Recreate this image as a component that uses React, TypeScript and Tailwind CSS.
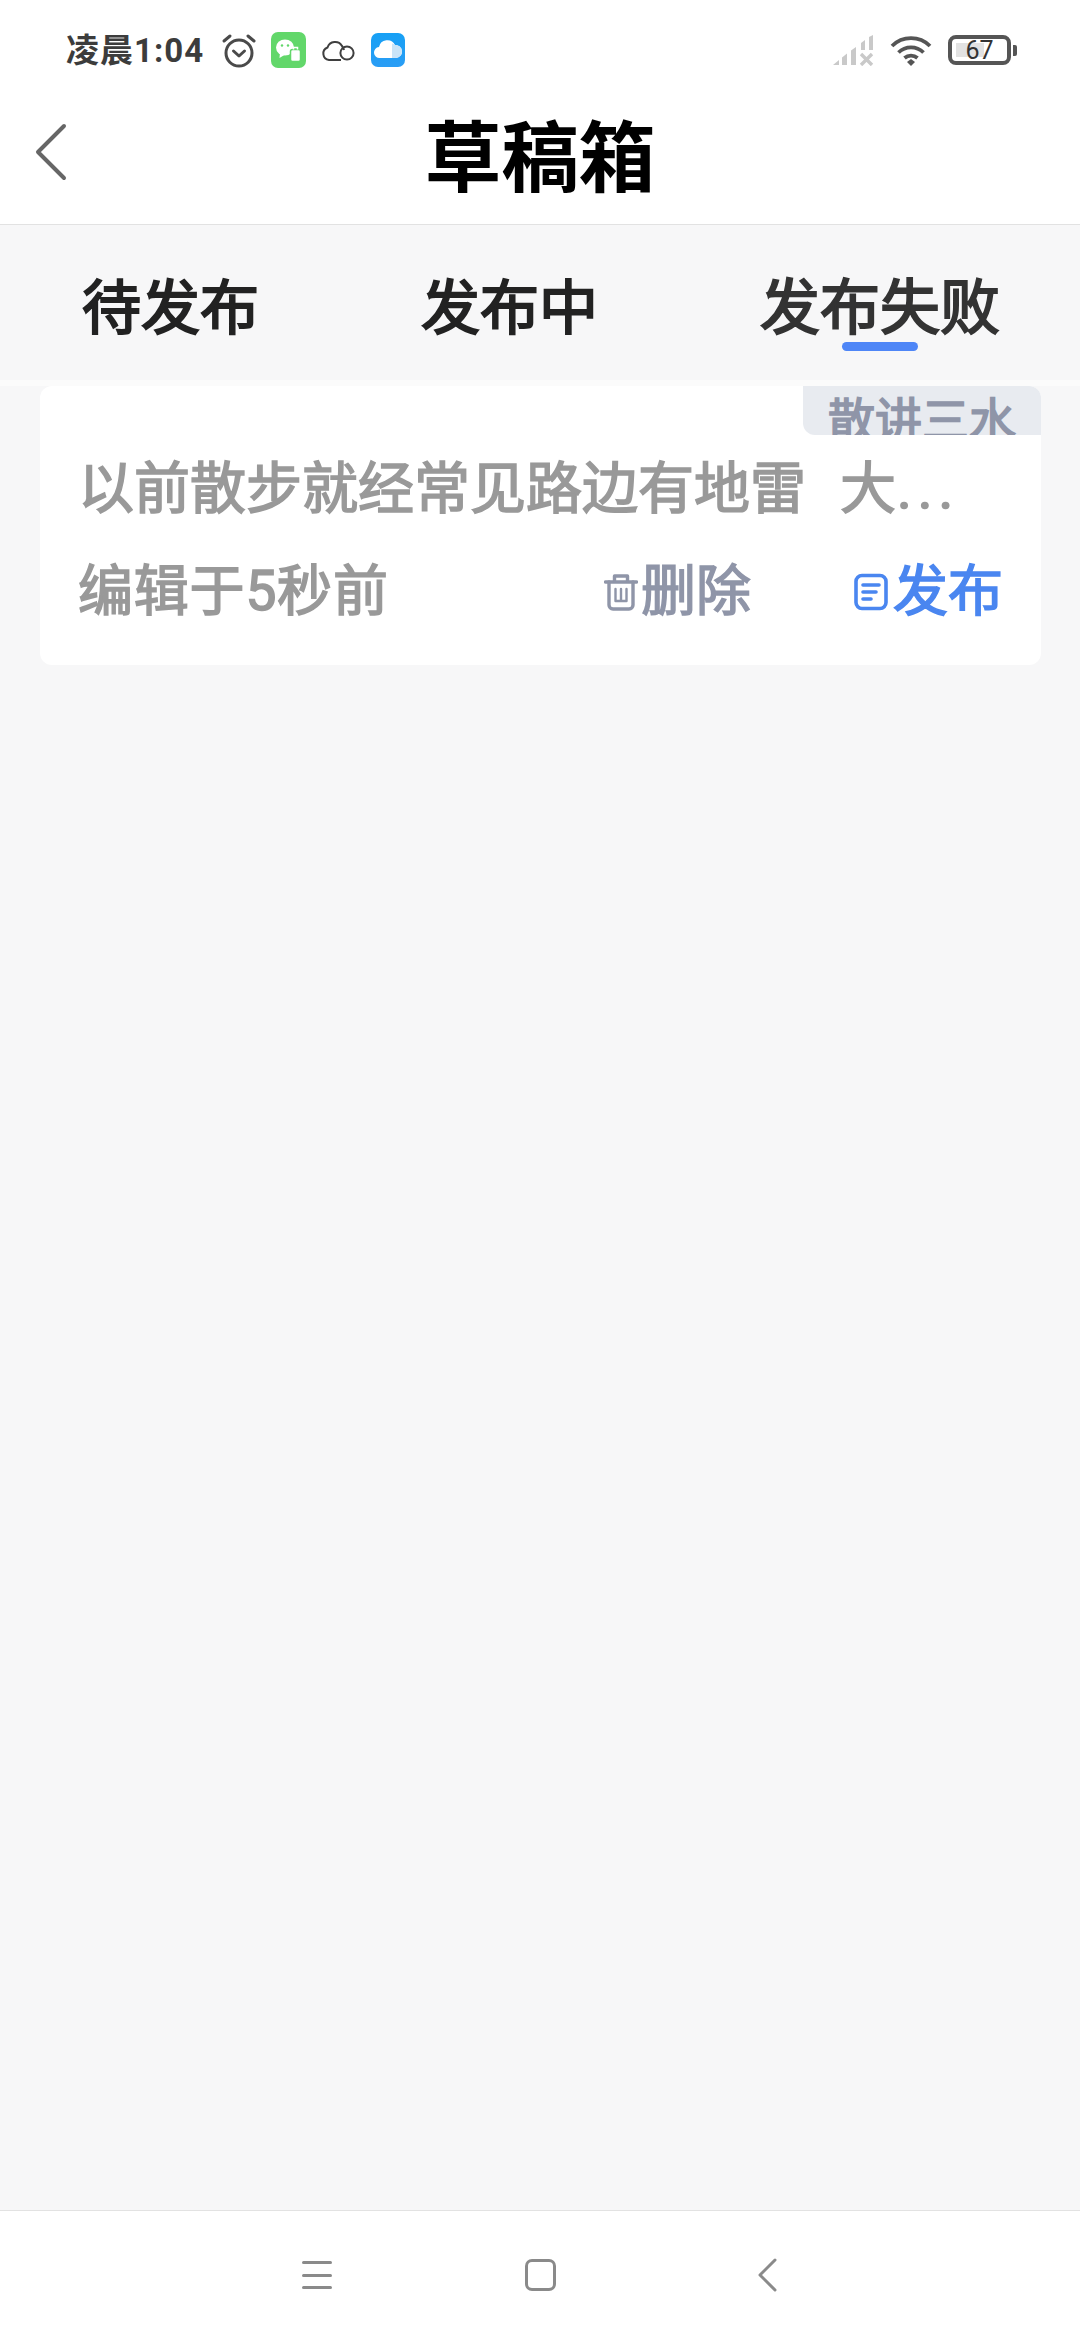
const CJK = "font-['Roboto','Noto_Sans_CJK_SC',sans-serif]";

function Alarm() {
  return (
    <svg width="36" height="35" viewBox="0 0 36 35" fill="none" stroke="#4a4a4a" strokeWidth="3" strokeLinecap="round" strokeLinejoin="round">
      <circle cx="18" cy="20" r="13" />
      <path d="M3 8 L9 3" />
      <path d="M33 8 L27 3" />
      <path d="M12.5 18 L18 23 L23.5 18" />
    </svg>
  );
}

function WeChatTile() {
  return (
    <svg width="35" height="36" viewBox="0 0 35 36">
      <rect x="0" y="0" width="35" height="36" rx="7" fill="#62d76a" />
      <ellipse cx="14" cy="15.5" rx="9" ry="8" fill="#ffffff" />
      <path d="M9 20 L8.5 26 L15 22 Z" fill="#ffffff" />
      <circle cx="11" cy="13.5" r="1.2" fill="#62d76a" />
      <circle cx="17" cy="13.5" r="1.2" fill="#62d76a" />
      <rect x="19.5" y="17.5" width="10" height="12" rx="2" fill="#ffffff" stroke="#62d76a" strokeWidth="1.5" />
      <path d="M22.5 17.5 V15.5 H26.5 V17.5" fill="none" stroke="#ffffff" strokeWidth="1.5" />
    </svg>
  );
}

function CloudOutline() {
  return (
    <svg width="34" height="23" viewBox="0 0 34 23" fill="none" stroke="#3f3f3f" strokeWidth="2">
      <path d="M20 21 H8 A6.5 6.5 0 0 1 6.5 8.5 A8 8 0 0 1 21 7 A9 9 0 0 1 23 11" />
      <circle cx="26" cy="14" r="6.6" />
    </svg>
  );
}

function CloudTile() {
  return (
    <svg width="34" height="34" viewBox="0 0 34 34">
      <defs>
        <linearGradient id="tile" x1="0" y1="0" x2="0" y2="1">
          <stop offset="0" stopColor="#16a0f5" />
          <stop offset="1" stopColor="#2a9df5" />
        </linearGradient>
      </defs>
      <rect width="34" height="34" rx="7" fill="url(#tile)" />
      <path d="M9 25 A5.5 5.5 0 0 1 8 14 A8.5 8.5 0 0 1 24 12 A6.5 6.5 0 0 1 25 25 Z" fill="#ffffff" />
      <path d="M21 25 V10.5 A8.5 8.5 0 0 1 24 12 A6.5 6.5 0 0 1 25 25 Z" fill="#c9e4f8" />
    </svg>
  );
}

function Signal() {
  return (
    <svg width="41" height="31" viewBox="0 0 41 31" fill="#c9c9c9">
      <path d="M0 30 L6 25 V30 Z" />
      <path d="M9 22.5 L14 18.5 V30 H9 Z" />
      <path d="M18 15.5 L23 12 V30 H18 Z" />
      <path d="M28 8 L32 5 V15 H28 Z" />
      <path d="M36 2 L40 0 V15 H36 Z" />
      <path d="M28 19 L39 30 M39 19 L28 30" stroke="#c9c9c9" strokeWidth="3.4" fill="none" />
    </svg>
  );
}

function Wifi() {
  return (
    <svg width="42" height="31" viewBox="0 0 42 31" fill="none" stroke="#555555" strokeWidth="3.8">
      <path d="M2 11 A27 27 0 0 1 40 11" />
      <path d="M8.5 17.5 A18 18 0 0 1 33.5 17.5" />
      <path d="M14.5 23 A10 10 0 0 1 27.5 23" />
      <path d="M17 27 L21 24 L25 27 L21 31 Z" fill="#555555" stroke="none" />
    </svg>
  );
}

function Battery() {
  return (
    <div className="flex items-center gap-[2px]">
      <div className="relative flex h-[30px] w-[63px] items-center justify-center rounded-[8px] border-[4px] border-[#555555]">
        <div className="absolute left-[4px] top-[4px] h-[14px] w-[28px] bg-[#e2e2e2]" />
        <span className={`relative text-[25px] leading-none text-[#333333] ${CJK}`}>67</span>
      </div>
      <div className="h-[11px] w-[4px] rounded-r-[2px] bg-[#555555]" />
    </div>
  );
}

function StatusBar() {
  return (
    <div className="flex h-[100px] items-center justify-between bg-white pl-[66px] pr-[63px]">
      <div className="flex items-center">
        <span className={`w-[137px] whitespace-nowrap text-[33px] font-bold leading-none tracking-[1px] text-[#3c3c3c] ${CJK}`}>
          凌晨1:04
        </span>
        <div className="ml-[18px] flex items-center">
          <Alarm />
          <div className="ml-[14px]"><WeChatTile /></div>
          <div className="ml-[15px]"><CloudOutline /></div>
          <div className="ml-[16px]"><CloudTile /></div>
        </div>
      </div>
      <div className="flex items-center">
        <Signal />
        <div className="ml-[16px]"><Wifi /></div>
        <div className="ml-[16px]"><Battery /></div>
      </div>
    </div>
  );
}

function Header() {
  return (
    <div className="relative flex h-[125px] items-center justify-center border-b border-[#e2e2e2] bg-white">
      <svg className="absolute left-[34px] top-[23px]" width="34" height="58" viewBox="0 0 34 58" fill="none" stroke="#666666" strokeWidth="4" strokeLinecap="round" strokeLinejoin="round">
        <path d="M30 3 L4 29 L30 55" />
      </svg>
      <span className={`pb-[4px] text-[77px] font-bold leading-none text-black ${CJK}`}>草稿箱</span>
    </div>
  );
}

function Tabs() {
  return (
    <div className="flex h-[155px] items-start justify-between bg-[#f7f7f8] pl-[82px] pr-[80px] pt-[54px]">
      <span className={`text-[59px] font-normal leading-none text-[#222222] [-webkit-text-stroke:2px] ${CJK}`}>待发布</span>
      <span className={`text-[59px] font-normal leading-none text-[#222222] [-webkit-text-stroke:2px] ${CJK}`}>发布中</span>
      <div className="flex flex-col items-center">
        <span className={`text-[60px] font-normal leading-none text-[#333333] [-webkit-text-stroke:2px] ${CJK}`}>发布失败</span>
        <div className="mt-[3px] h-[9px] w-[76px] rounded-full bg-[#4e86f7]" />
      </div>
    </div>
  );
}

function Trash() {
  return (
    <svg width="34" height="38" viewBox="0 0 34 38" fill="none" stroke="#8f95a8" strokeWidth="3.4" strokeLinecap="round" strokeLinejoin="round">
      <path d="M1.5 9 H32.5" />
      <path d="M10.5 8 V3 H23.5 V8" />
      <path d="M5 9 V32 A4 4 0 0 0 9 36 H25 A4 4 0 0 0 29 32 V9" />
      <path d="M11.5 16 V28 H22.5 V16 M17 16 V28" strokeWidth="2.4" />
    </svg>
  );
}

function Doc() {
  return (
    <svg width="34" height="38" viewBox="0 0 34 38" fill="none" stroke="#4a86f0" strokeWidth="3.6" strokeLinecap="round">
      <rect x="2" y="2.5" width="30" height="33" rx="6" />
      <path d="M9 12 H25 M9 19 H22 M9 26 H17" />
    </svg>
  );
}

function Card() {
  return (
    <div className="ml-[40px] flex h-[279px] w-[1001px] flex-col rounded-[12px] bg-white">
      <div className="flex justify-end">
        <div className="h-[49px] w-[238px] overflow-hidden rounded-bl-[12px] rounded-tr-[12px] bg-[#e8ebf0] pl-[25px] pt-[11px]">
          <span className={`block whitespace-nowrap text-[47px] font-normal leading-none text-[#8f95a8] [-webkit-text-stroke:1.6px] ${CJK}`}>散讲三水</span>
        </div>
      </div>
      <div className={`ml-[38px] mt-[26px] flex items-baseline whitespace-nowrap text-[56px] font-normal leading-none text-[#999999] [-webkit-text-stroke:1.6px] ${CJK}`}>
        <span>以前散步就经常见路边有地雷</span>
        <span className="ml-[34px]">大</span>
        <span className="ml-[1px] tracking-[6px]">...</span>
      </div>
      <div className="mt-[47px] flex items-center pl-[38px]">
        <span className={`w-[526px] whitespace-nowrap text-[55px] font-normal leading-none tracking-[0.8px] text-[#999999] [-webkit-text-stroke:1.6px] ${CJK}`}>编辑于5秒前</span>
        <Trash />
        <span className={`ml-[3px] w-[110px] whitespace-nowrap text-[55px] font-normal leading-none text-[#8f95a8] [-webkit-text-stroke:1.6px] ${CJK}`}>删除</span>
        <div className="ml-[103px]"><Doc /></div>
        <span className={`ml-[5px] whitespace-nowrap text-[55px] font-normal leading-none text-[#4a86f0] [-webkit-text-stroke:1.6px] ${CJK}`}>发布</span>
      </div>
    </div>
  );
}

function BottomNav() {
  return (
    <div className="flex h-[130px] items-center border-t border-[#e2e2e2] bg-white pb-[1px]">
      <div className="ml-[302px] flex w-[30px] flex-col gap-[9.5px]">
        <div className="h-[3px] rounded-full bg-[#8a8a8a]" />
        <div className="h-[3px] rounded-full bg-[#8a8a8a]" />
        <div className="h-[3px] rounded-full bg-[#8a8a8a]" />
      </div>
      <div className="ml-[193px] h-[32px] w-[31px] rounded-[7px] border-[3px] border-[#8a8a8a]" />
      <svg className="ml-[202px]" width="19" height="34" viewBox="0 0 19 34" fill="none" stroke="#8a8a8a" strokeWidth="3" strokeLinecap="round" strokeLinejoin="round">
        <path d="M17 2 L2 17 L17 32" />
      </svg>
    </div>
  );
}

export default function App() {
  return (
    <div className="flex h-[2340px] w-[1080px] flex-col overflow-hidden bg-[#f7f7f8]">
      <StatusBar />
      <Header />
      <Tabs />
      <div className="h-[6px] bg-[#fbfbfb]" />
      <div className="flex-1">
        <Card />
      </div>
      <BottomNav />
    </div>
  );
}
